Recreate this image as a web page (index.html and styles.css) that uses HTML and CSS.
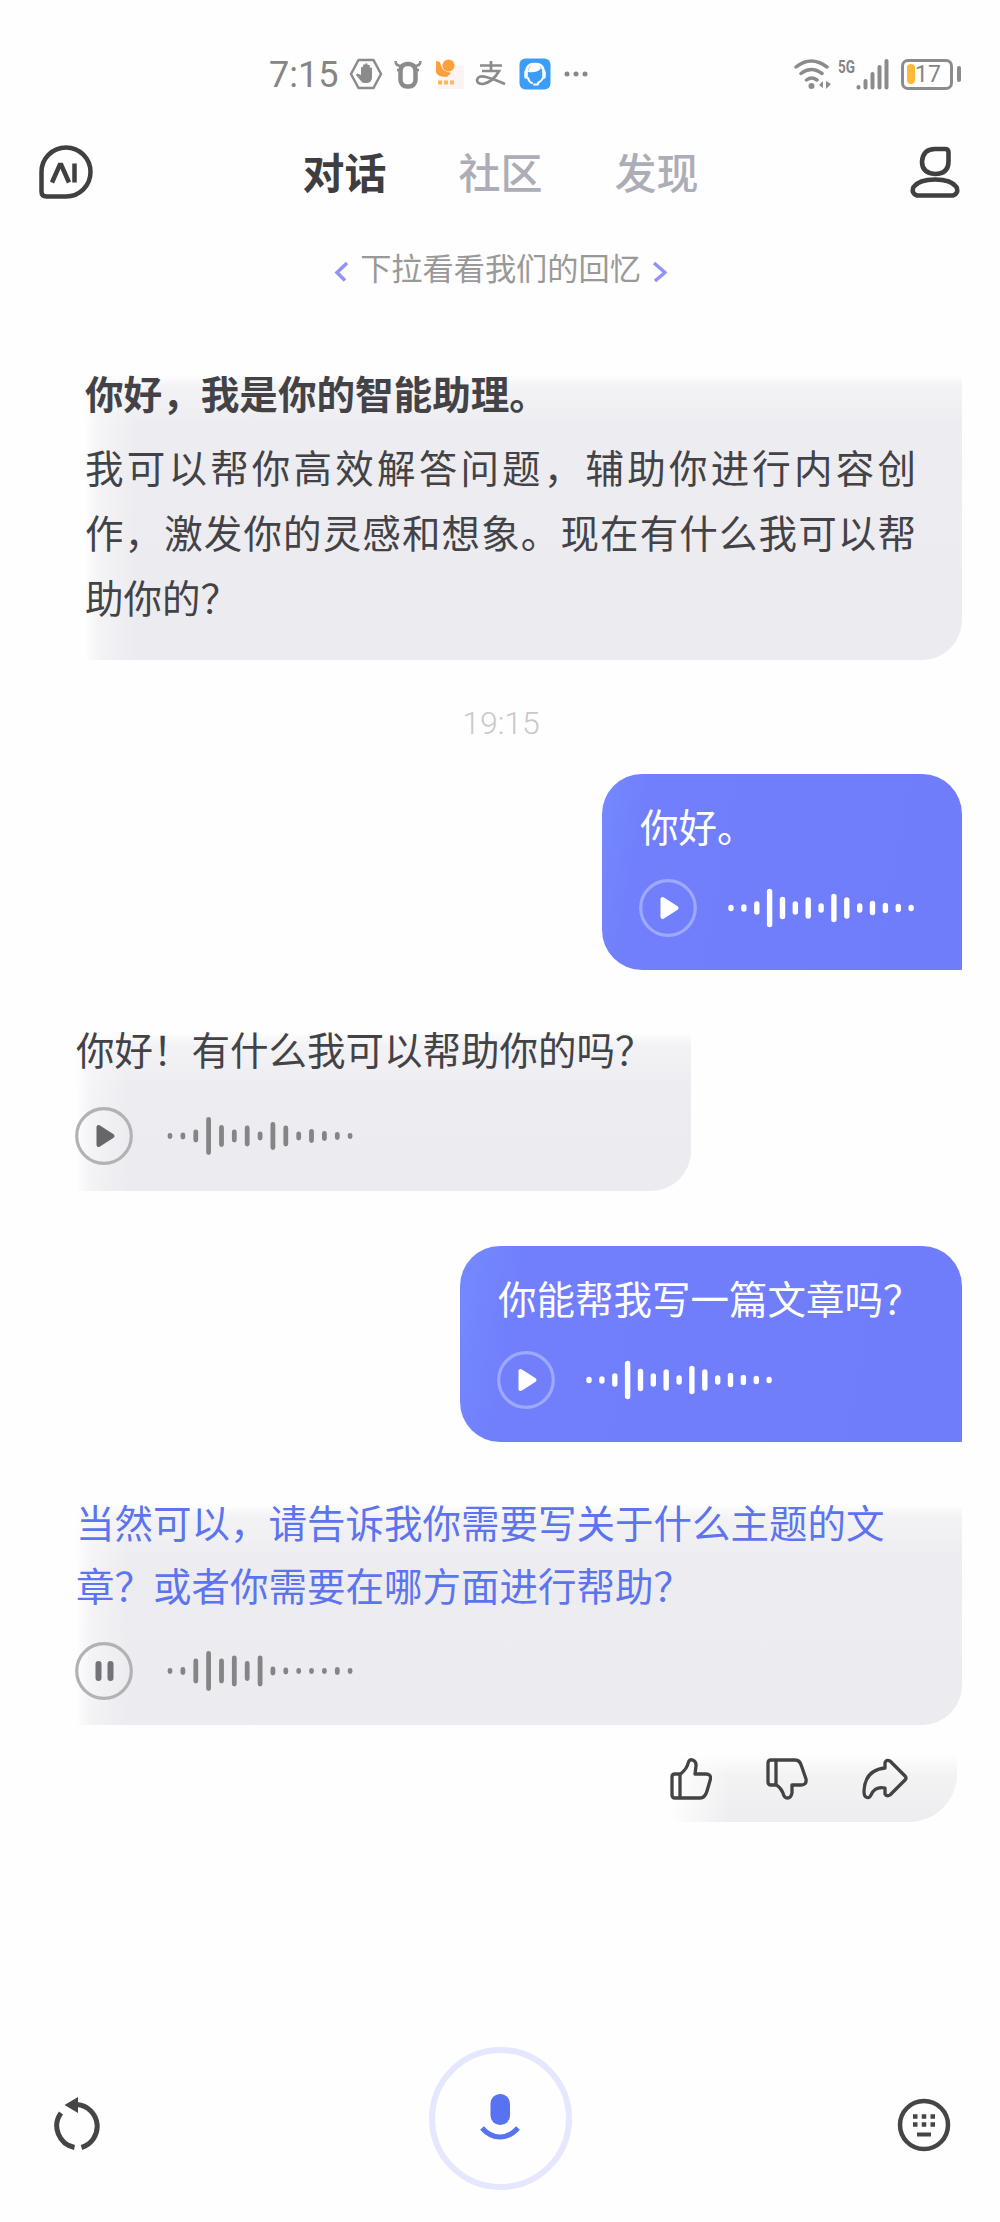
FILE: index.html
```html
<!DOCTYPE html>
<html lang="zh-CN">
<head>
<meta charset="utf-8">
<title>对话</title>
<link rel="stylesheet" href="styles.css">
</head>
<body>
<svg class="defs" width="0" height="0">
  <symbol id="wave" viewBox="0 0 188 42">
    <path d="M3 20.5v1M15.900 20v2M28.800 17v8M41.600 4.500v33M54.500 12.500v17M67.300 17v8M80.200 13v16M93.100 19v4M105.900 9.500v23M118.800 13v16M131.700 19v4M144.500 16.500v9M157.400 18.500v5M170.300 19.500v3M183.100 20.500v1"/>
  </symbol>
  <symbol id="wave-live" viewBox="0 0 188 42">
    <path d="M3 20.500v1M15.900 19.500v3M28.800 11v20M41.600 3.500v35M54.500 11v20M67.300 8v26M80.200 13.500v15M93.100 8v26M105.900 19v4M118.800 20v2M131.700 20.500v1M144.500 20.500v1M157.400 20.500v1M170.300 19.500v3M183.100 20.500v1"/>
  </symbol>
  <symbol id="play" viewBox="0 0 58 58">
    <circle class="ring" cx="29" cy="29" r="27.300"/>
    <path class="glyph" d="M23.500 20v18l14-9z"/>
  </symbol>
  <symbol id="pause" viewBox="0 0 58 58">
    <circle class="ring" cx="29" cy="29" r="27.300"/>
    <path class="bars" d="M23.500 22v14M35.500 22v14"/>
  </symbol>
</svg>
<div class="screen">
  <header class="status">
    <div class="status-left">
      <span class="clock">7:15</span>
      <svg width="34" height="32" viewBox="0 0 34 32"><path d="M9.500 2h15L32 16l-7.500 14h-15L2 16z" fill="none" stroke="#8b8b8b" stroke-width="2.500" stroke-linejoin="round"/><path d="M12 17V9.500q1-1.500 2 0V7q1.200-1.500 2.200 0V6q1.300-1.500 2.400 0v1.500q1.200-1.500 2.200 0V10q1.200-1.200 2.200 0v10q-.5 5-5.500 5h-2q-2.500 0-4-2.500L7 17q.5-2 2.500-1z" fill="#8b8b8b"/></svg>
      <svg width="28" height="30" viewBox="0 0 28 30"><path d="M1.500 2q0 5 6 5M26.500 2q0 5-6 5M3 11h5M25 11h-5" fill="none" stroke="#8b8b8b" stroke-width="2.500"/><rect x="6.500" y="5" width="15" height="22.500" rx="6.500" fill="none" stroke="#8b8b8b" stroke-width="4.500"/></svg>
      <svg width="30" height="32" viewBox="0 0 30 32"><path d="M7 6L30 8v23H3z" fill="#fdf3f3"/><circle cx="14.500" cy="7.500" r="6" fill="#fba03b"/><path d="M2 3l4 1q2 8 5 9l6 2-4 4Q0 19 2 10z" fill="#fba03b"/><path d="M4 24.500h16" stroke="#fbb85b" stroke-width="4" stroke-dasharray="4 2"/></svg>
      <svg width="32" height="28" viewBox="0 0 32 28"><path d="M5 5.500h22M16 1v10M7 11h17Q18 22 8 24q-6 0-6-4 1-5 9-3 8 2 19 7" fill="none" stroke="#8b8b8b" stroke-width="2.700"/></svg>
      <svg width="32" height="32" viewBox="0 0 32 32"><rect x=".5" y=".5" width="31" height="31" rx="6" fill="#3b9df6"/><path d="M7 15Q8 5 16 6q8-1 9 9" fill="none" stroke="#fff" stroke-width="2.500"/><path d="M9 14Q10 6 17 6.500q4 .5 5 4-5 5-13 3.500z" fill="#fff"/><path d="M7 14v5M25 14v5" stroke="#fff" stroke-width="3.500" stroke-linecap="round"/><path d="M25 18q-2 5-6 7M9 20q1 4 4 5M15 26.500h4" fill="none" stroke="#fff" stroke-width="2" stroke-linecap="round"/></svg>
      <svg width="26" height="6" viewBox="0 0 26 6"><circle cx="5" cy="3" r="2.500" fill="#888"/><circle cx="14" cy="3" r="2.500" fill="#888"/><circle cx="23" cy="3" r="2.500" fill="#888"/></svg>
    </div>
    <div class="status-right">
      <svg width="38" height="32" viewBox="0 0 38 32"><g fill="none" stroke="#8b8b8b" stroke-width="3.500" stroke-linecap="round"><path d="M3 9Q18-3 34 9M8 15.500q10-8 21 0M13.500 22q5-4 10.500 0"/></g><circle cx="18.500" cy="28" r="3" fill="#8b8b8b"/><path d="M30 23v7l-4-3zM33 23v8l5-5z" fill="#8b8b8b"/></svg>
      <span class="net">5G</span>
      <svg class="signal" width="33" height="32" viewBox="0 0 33 32"><path d="M2.500 29v.5M9.500 23v6.500M16.500 16v13.500M23.500 9v20.500M30.500 3v26.500" stroke="#8b8b8b" stroke-width="4" stroke-linecap="round"/></svg>
      <div class="battery"><i class="charge"></i><span>17</span></div><i class="battery-tip"></i>
    </div>
  </header>

  <nav class="nav">
    <svg width="54" height="54" viewBox="0 0 54 54" fill="none" stroke="#404042" stroke-width="4.500"><path d="M2.500 27A24.500 24.500 0 1 1 27 51.500H7.500q-5 0-5-5z"/><path d="M13 37.500L20.700 20h1.600L30 37.500M35.500 18.500v19" stroke-width="4.500"/></svg>
    <div class="tabs">
      <span class="tab active">对话</span><span class="tab">社区</span><span class="tab">发现</span>
    </div>
    <svg width="50" height="52" viewBox="0 0 50 52" fill="none" stroke="#404042" stroke-width="4.600" stroke-linejoin="round"><path d="M25 3h10q3.500 0 3.500 3.500V15q0 13-13.500 13Q12 27 12 15.500 13 3 25 3z"/><path d="M7 49.500h36q6-2 3.500-8.500Q41 33.500 25 33.500T3.500 41Q1 47.500 7 49.500z"/></svg>
  </nav>

  <div class="memory">
    <svg width="15" height="22" viewBox="0 0 15 22"><path d="M13 2L3 11.500l8 8"/></svg>
    <span>下拉看看我们的回忆</span>
    <svg width="15" height="22" viewBox="0 0 15 22"><path d="M2 2l11 9.500L3 20"/></svg>
  </div>

  <main class="chat">
    <section class="card intro">
      <h1>你好，我是你的智能助理。</h1>
      <p>我可以帮你高效解答问题，辅助你进行内容创作，激发你的灵感和想象。现在有什么我可以帮助你的？</p>
    </section>
    <time class="time">19:15</time>
    <section class="bubble first">
      <p>你好。</p>
      <div class="audio"><svg class="button"><use href="#play"/></svg><svg class="wave"><use href="#wave"/></svg></div>
    </section>
    <section class="card reply">
      <p>你好！有什么我可以帮助你的吗？</p>
      <div class="audio"><svg class="button"><use href="#play"/></svg><svg class="wave"><use href="#wave"/></svg></div>
    </section>
    <section class="bubble second">
      <p>你能帮我写一篇文章吗？</p>
      <div class="audio"><svg class="button"><use href="#play"/></svg><svg class="wave"><use href="#wave"/></svg></div>
    </section>
    <section class="card speaking">
      <p>当然可以，请告诉我你需要写关于什么主题的文章？或者你需要在哪方面进行帮助？</p>
      <div class="audio"><svg class="button"><use href="#pause"/></svg><svg class="wave"><use href="#wave-live"/></svg></div>
    </section>
    <div class="actions">
      <svg width="42" height="42" viewBox="0 0 42 42"><path d="M2 19q0-3 3-3h5.500Q17 11 18.500 4q1-3 4-2 4 1.500 3.500 6l-1 8H36q5 0 4.500 5L37 33q-2 7-7 7H5q-3 0-3-3zM10 16v24"/></svg>
      <svg width="42" height="42" viewBox="0 0 42 42"><path d="M2 5q0-3 3-3h24q5 0 6.500 6L40 21q1 6-5 6h-9v8q-1 5-4.500 5T17 35q-2-5-6.500-8H5q-3 0-3-3zM10 2v25"/></svg>
      <svg width="46" height="42" viewBox="0 0 46 42"><path d="M23 10V5q1-4 5-2l15 15q2 2 0 4L28 37q-3 2-5-1v-6q-10-2-14 7-2 4-5 2-2-1-2-6Q3 12 23 10z"/></svg>
    </div>
  </main>

  <footer class="dock">
    <svg width="50" height="56" viewBox="0 0 50 56"><path d="M21.500 50.500A22 22 0 0 1 8 16M28.500 50.500A22 22 0 0 0 24 7.500" fill="none" stroke="#454545" stroke-width="5"/><path d="M11.500 8L25 0v16z" fill="#454545"/></svg>
    <div class="mic"><svg width="44" height="50" viewBox="0 0 44 50"><rect x="12.500" y="0" width="19.500" height="31" rx="9.500" fill="#5873f2"/><path d="M4 34q8 9 18 9t18-9" fill="none" stroke="#5873f2" stroke-width="5"/></svg></div>
    <svg width="54" height="54" viewBox="0 0 54 54"><circle cx="27" cy="27" r="24" fill="none" stroke="#454545" stroke-width="4.500"/><path d="M16 18.500h22M16 26.500h22" stroke="#454545" stroke-width="4.500" stroke-dasharray="4.500 4.250"/><path d="M20 36.500h14" stroke="#454545" stroke-width="4"/></svg>
  </footer>
</div>
</body>
</html>
```
FILE: styles.css
```css
* { box-sizing: border-box; }
body, h1, p { margin: 0; }
body { background: #fefefe; }
.defs { display: block; }
.screen {
  width: 1000px;
  height: 2222px;
  display: flex;
  flex-direction: column;
  font-family: "Noto Sans CJK SC", sans-serif;
  color: #434347;
}
svg { flex: none; }

.status {
  height: 104px;
  padding: 44px 39px 0 269px;
  display: flex;
  justify-content: space-between;
  align-items: center;
  color: #858585;
  font-family: Roboto, sans-serif;
}
.status-left, .status-right { display: flex; align-items: center; }
.status-left { gap: 11.500px; }
.clock { font-size: 36px; line-height: 40px; margin-right: -1px; padding-top: 2px; }
.net {
  width: 18px;
  margin: -1px 0 0 7px;
  align-self: flex-start;
  font-size: 18px;
  line-height: 20px;
  font-weight: 700;
  transform: scaleX(.75);
  transform-origin: left;
}
.signal { margin: 0 12px 0 0; }
.battery {
  width: 52px;
  height: 31px;
  border: 3px solid #8b8b8b;
  border-radius: 7px;
  padding-left: 3px;
  display: flex;
  align-items: center;
  font-size: 23px;
}
.charge { width: 8px; height: 20px; border-radius: 4px; background: #fdb938; }
.battery-tip { width: 4px; height: 16px; margin-left: 4px; border-radius: 2px; background: #8b8b8b; }

.nav {
  height: 136px;
  padding: 0 40px 0 39px;
  display: flex;
  align-items: center;
  justify-content: space-between;
}
.tabs { display: flex; gap: 72px; margin-top: -3px; margin-right: 2px; }
.tab { font-size: 42px; line-height: 60px; font-weight: 500; color: #acadb6; white-space: nowrap; }
.tab.active { font-weight: 700; color: #3e3e40; }

.memory {
  height: 56px;
  display: flex;
  align-items: center;
  justify-content: center;
  gap: 11px;
  padding-left: 1px;
  font-size: 31.200px;
  line-height: 40px;
  color: #999;
}
.memory span { margin-top: -2px; }
.memory svg { margin-top: 7px; fill: none; stroke: #9092f8; stroke-width: 3.500; }

.chat {
  padding: 79px 38px 0 76px;
  display: flex;
  flex-direction: column;
  align-items: flex-start;
  font-size: 38.500px;
}
.card {
  --ring: #b2b2b4;
  --glyph: #68656b;
  background:
    linear-gradient(to right, #fefefe 0, rgba(254, 254, 254, .45) 14px, rgba(254, 254, 254, 0) 52px),
    linear-gradient(to bottom, #fefefe 0, #f3f3f6 12px, #ededf1 54px, #ebebf0 100%);
  border-radius: 0 0 40px 0;
}
.intro { align-self: stretch; height: 285px; margin-left: 9px; padding-right: 46px; }
.intro h1 { font-size: 38.600px; line-height: 34px; font-weight: 700; }
.intro p { margin-top: 24.500px; line-height: 65px; text-align: justify; }
.time {
  align-self: center;
  height: 114px;
  padding: 8px 0 0;
  margin-right: 36px;
  line-height: 110px;
  font-family: Roboto, sans-serif;
  font-weight: 300;
  font-size: 32px;
  color: #c9c9cb;
}
.audio { display: flex; align-items: center; gap: 34px; height: 58px; }
.button { width: 58px; height: 58px; }
.wave { width: 188px; height: 42px; fill: none; stroke: currentColor; stroke-width: 4.800; stroke-linecap: round; }
.ring { fill: none; stroke: var(--ring); stroke-width: 3.200; }
.glyph { fill: var(--glyph); stroke: var(--glyph); stroke-width: 4; stroke-linejoin: round; }
.bars { fill: none; stroke: #737276; stroke-width: 6; stroke-linecap: round; }
.card .audio { color: #858588; margin-left: -1px; }

.bubble {
  --ring: #9da8ff;
  --glyph: #fff;
  align-self: flex-end;
  height: 196px;
  padding: 23px 0 0 38px;
  border-radius: 40px 40px 1px 40px;
  background: linear-gradient(100deg, #748aff 0, #717ffc 12%, #6f7dfa 100%);
  color: #fff;
}
.bubble p { line-height: 56px; }
.bubble .audio { margin: 26px 0 0 -1px; gap: 31px; }
.bubble .wave { stroke-width: 5.400; }
.first { width: 360px; }
.second { width: 502px; margin-top: 55.500px; }

.reply { width: 615px; height: 157.500px; margin-top: 63px; }
.reply p { line-height: 31px; margin-bottom: 43px; }
.speaking { display: flow-root; align-self: stretch; height: 220px; margin-top: 62.500px; }
.speaking p { margin: -15px 60px 25.500px 0; line-height: 63.500px; color: #5d74ef; }

.actions {
  align-self: flex-end;
  width: 287px;
  height: 67px;
  margin: 30px 5px 0 0;
  padding: 3px 49px 0 0;
  display: flex;
  justify-content: space-between;
  border-radius: 0 0 48px 0;
  background:
    linear-gradient(to right, #fefefe 0, rgba(254, 254, 254, 0) 60px),
    linear-gradient(to bottom, #fefefe 0, #f3f3f4 20px, #ededf0 100%);
}
.actions svg { fill: none; stroke: #434345; stroke-width: 3.300; stroke-linejoin: round; }

.dock {
  margin-top: auto;
  padding: 0 49px 32px 53px;
  display: flex;
  align-items: center;
  justify-content: space-between;
}
.dock > svg { margin-top: 13px; }
.mic {
  width: 143px;
  height: 143px;
  border: 6px solid #e4e7fe;
  border-radius: 50%;
  display: flex;
  align-items: center;
  justify-content: center;
}
```
